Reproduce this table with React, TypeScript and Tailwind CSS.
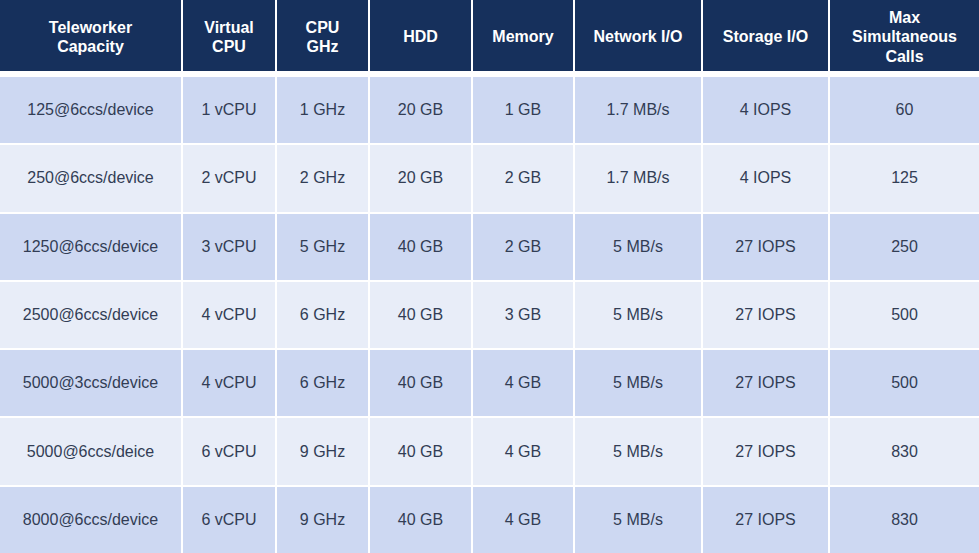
import React from "react";

const headers: string[][] = [
  ["Teleworker", "Capacity"],
  ["Virtual", "CPU"],
  ["CPU", "GHz"],
  ["HDD"],
  ["Memory"],
  ["Network I/O"],
  ["Storage I/O"],
  ["Max", "Simultaneous", "Calls"],
];

const rows: string[][] = [
  ["125@6ccs/device", "1 vCPU", "1 GHz", "20 GB", "1 GB", "1.7 MB/s", "4 IOPS", "60"],
  ["250@6ccs/device", "2 vCPU", "2 GHz", "20 GB", "2 GB", "1.7 MB/s", "4 IOPS", "125"],
  ["1250@6ccs/device", "3 vCPU", "5 GHz", "40 GB", "2 GB", "5 MB/s", "27 IOPS", "250"],
  ["2500@6ccs/device", "4 vCPU", "6 GHz", "40 GB", "3 GB", "5 MB/s", "27 IOPS", "500"],
  ["5000@3ccs/device", "4 vCPU", "6 GHz", "40 GB", "4 GB", "5 MB/s", "27 IOPS", "500"],
  ["5000@6ccs/deice", "6 vCPU", "9 GHz", "40 GB", "4 GB", "5 MB/s", "27 IOPS", "830"],
  ["8000@6ccs/device", "6 vCPU", "9 GHz", "40 GB", "4 GB", "5 MB/s", "27 IOPS", "830"],
];

export default function App() {
  return (
    <div
      className="w-[979px] h-[553px] bg-white overflow-hidden"
      style={{ fontFamily: '"Liberation Sans", Arial, sans-serif' }}
    >
      <div className="grid h-full grid-cols-[181px_92px_91px_101px_100px_126px_125px_149px] grid-rows-[75px_repeat(7,1fr)] gap-x-[2px] gap-y-[2px]">
        {headers.map((h, i) => (
          <div
            key={"h" + i}
            className="mb-[4px] pt-[3px] flex flex-col items-center justify-center bg-[#16305c] text-white font-bold text-[16px] leading-[19.5px] text-center"
          >
            {h.map((line, j) => (
              <span key={j}>{line}</span>
            ))}
          </div>
        ))}
        {rows.map((r, ri) =>
          r.map((c, ci) => (
            <div
              key={ri + "-" + ci}
              className={
                "flex items-center justify-center text-[16px] text-[#323d55] " +
                (ri % 2 === 0 ? "bg-[#cdd8f2]" : "bg-[#e8edf8]")
              }
            >
              {c}
            </div>
          ))
        )}
      </div>
    </div>
  );
}
